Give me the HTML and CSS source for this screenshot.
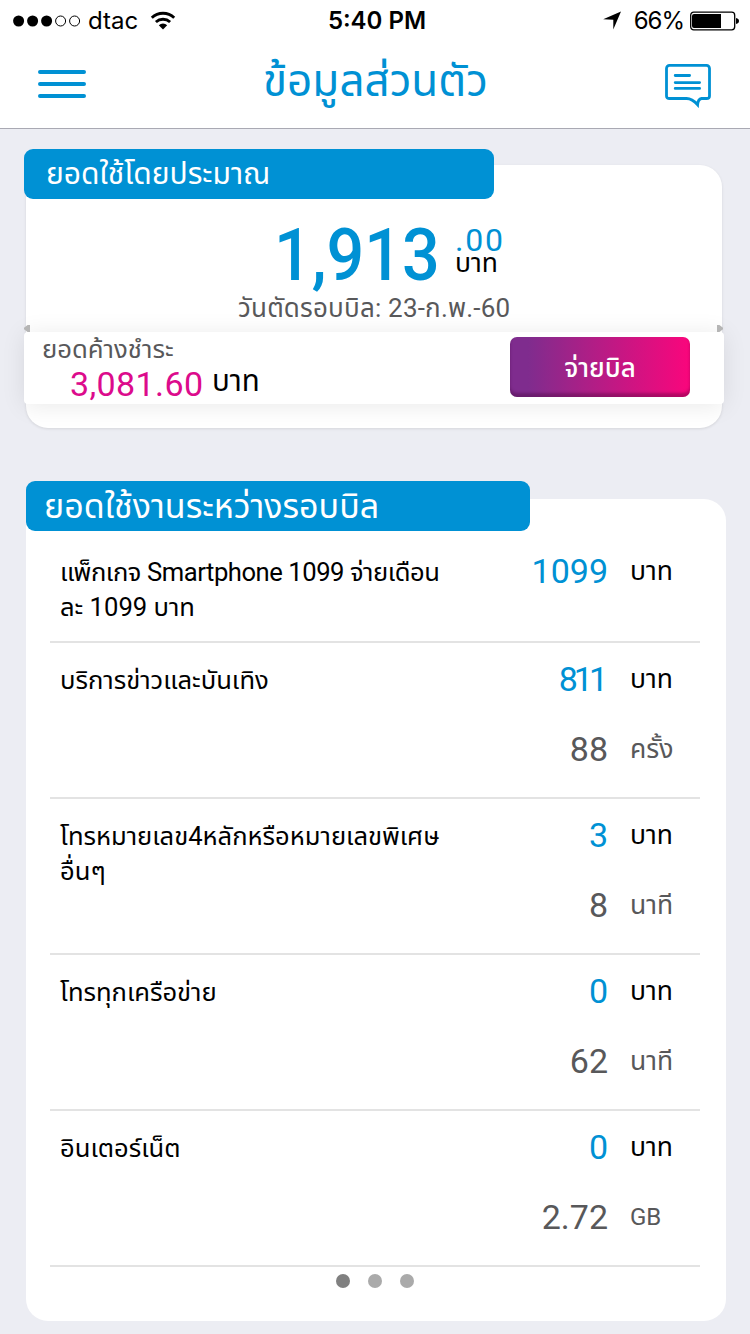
FILE: index.html
```html
<!DOCTYPE html>
<html lang="th">
<head>
    <meta charset="UTF-8">
    <meta name="viewport" content="width=device-width, initial-scale=1.0">
    <title>ข้อมูลส่วนตัว</title>
    <link rel="stylesheet" href="styles.css">
</head>
<body>
    <!-- Status bar -->
    <div class="status">
        <div class="status-left">
            <svg width="68" height="12" viewBox="0 0 68 12">
                <circle cx="5.6" cy="6" r="5.5"/>
                <circle cx="19.6" cy="6" r="5.5"/>
                <circle cx="33.6" cy="6" r="5.5"/>
                <circle cx="47.6" cy="6" r="5" fill="none" stroke="#000"/>
                <circle cx="61.6" cy="6" r="5" fill="none" stroke="#000"/>
            </svg>
            <span class="carrier">dtac</span>
            <svg class="wifi" width="26" height="20" viewBox="0 0 26 20">
                <path d="M1.8 6.7a16.5 16.5 0 0 1 22.4 0M5.9 11a10.6 10.6 0 0 1 14.2 0" fill="none" stroke="#000" stroke-width="2.9"/>
                <path d="M13 18.6l-4.2-4.4a6.3 6.3 0 0 1 8.4 0z"/>
            </svg>
        </div>
        <div class="clock">5:40 PM</div>
        <div class="status-right">
            <svg width="18" height="19" viewBox="0 0 18 19">
                <path d="M18 0.5L10.3 18.5V8.8L0.2 8.2z"/>
            </svg>
            <span class="percent">66%</span>
            <svg width="49" height="20" viewBox="0 0 49 20">
                <rect x="0.7" y="1.2" width="44" height="17.6" rx="3" fill="none" stroke="#000" stroke-width="1.3"/>
                <path d="M4 3h27v14H4a2 2 0 0 1-2-2V5a2 2 0 0 1 2-2zM46 7q3 .6 3 3t-3 3z"/>
            </svg>
        </div>
    </div>

    <!-- Header -->
    <div class="header">
        <svg width="48" height="30" viewBox="0 0 48 30">
            <path d="M2 3h44M2 15h44M2 27h44" stroke="#0091d4" stroke-width="4" stroke-linecap="round"/>
        </svg>
        <h1>ข้อมูลส่วนตัว</h1>
        <svg class="chat" width="46" height="44" viewBox="0 0 46 44" fill="none" stroke="#0091d4" stroke-width="2.8" stroke-linecap="round">
            <path d="M4.5 1.4h37a3 3 0 0 1 3 3v27.5q0 2.600-3 2.600h-5q-3.500.5-3.900 6.200q-5.500-6.200-11-6.200H4.500q-3 0-3-2.600V4.400a3 3 0 0 1 3-3z"/>
            <path d="M10.200 11.500h14.400M10.200 18.600h24.400M10.200 24.400h24.400"/>
        </svg>
    </div>

    <!-- Current balance -->
    <div class="tab tab-balance">ยอดใช้โดยประมาณ</div>
    <div class="card balance">
        <div class="total">
            <div class="baht"><span class="narrow">1,913</span></div>
            <div class="total-side">
                <span class="satang">.00</span>
                <span class="unit">บาท</span>
            </div>
        </div>
        <div class="cutoff">วันตัดรอบบิล: 23-ก.พ.-60</div>
        <div class="folds"><i></i><i></i></div>
        <div class="due">
            <div class="due-info">
                <div class="due-label">ยอดค้างชำระ</div>
                <div class="due-amount">
                    <span class="pink">3,081.60</span>
                    <span class="due-unit">บาท</span>
                </div>
            </div>
            <button class="btn-pay">จ่ายบิล</button>
        </div>
    </div>

    <!-- Usage in this billing cycle -->
    <div class="tab tab-usage">ยอดใช้งานระหว่างรอบบิล</div>
    <div class="card usage">
        <div class="row row-short">
            <div class="name"><span class="package">แพ็กเกจ Smartphone 1099 จ่ายเดือน</span><br>ละ 1099 บาท</div>
            <div class="num">1099</div><div class="unit">บาท</div>
        </div>
        <div class="row">
            <div class="name">บริการข่าวและบันเทิง</div>
            <div class="num tight">811</div><div class="unit">บาท</div>
            <div class="num used">88</div><div class="unit used">ครั้ง</div>
        </div>
        <div class="row">
            <div class="name">โทรหมายเลข4หลักหรือหมายเลขพิเศษ<br>อื่นๆ</div>
            <div class="num">3</div><div class="unit">บาท</div>
            <div class="num used">8</div><div class="unit used">นาที</div>
        </div>
        <div class="row">
            <div class="name">โทรทุกเครือข่าย</div>
            <div class="num">0</div><div class="unit">บาท</div>
            <div class="num used">62</div><div class="unit used">นาที</div>
        </div>
        <div class="row">
            <div class="name">อินเตอร์เน็ต</div>
            <div class="num">0</div><div class="unit">บาท</div>
            <div class="num used">2.72</div><div class="unit used gb">GB</div>
        </div>
        <div class="dots"><i class="active"></i><i></i><i></i></div>
    </div>
</body>
</html>
```
FILE: styles.css
```css
* {
    box-sizing: border-box;
}
body {
    margin: 0;
    height: 1334px;
    overflow: hidden;
    background: #ecedf3;
    color: #000;
    font-family: Roboto, "Noto Sans Thai", "Noto Sans", sans-serif;
    white-space: nowrap;
}
svg {
    display: block;
    flex: none;
}
.status {
    height: 40px;
    padding: 1px 11px 0 13px;
    display: grid;
    grid-template-columns: 1fr auto 1fr;
    align-items: center;
    background: #fff;
    font-family: Inter, sans-serif;
    font-size: 24px;
    line-height: 39px;
}
.status-left, .status-right {
    display: flex;
    align-items: center;
}
.carrier {
    margin-left: 7px;
}
.wifi {
    margin-left: 12px;
}
.clock {
    padding-left: 2px;
    font-weight: 600;
}
.status-right {
    justify-content: flex-end;
}
.percent {
    margin: 0 6px 0 13px;
    letter-spacing: -1px;
}
.header {
    height: 89px;
    padding: 0 39px 0 38px;
    display: flex;
    align-items: center;
    justify-content: space-between;
    background: #fff;
    border-bottom: 1px solid #a9a9b3;
}
.chat {
    margin-top: 4px;
}
h1 {
    margin: 0;
    color: #0091d4;
    font-size: 44px;
    font-weight: 400;
    line-height: 70px;
    padding-bottom: 6px;
}
.tab {
    position: relative;
    height: 50px;
    border-radius: 9px;
    background: #0091d4;
    color: #fff;
    line-height: 50px;
}
.tab-balance {
    width: 470px;
    margin: 20px 0 0 24px;
    padding-left: 22px;
    font-size: 30px;
}
.tab-usage {
    width: 504px;
    margin: 53px 0 0 26px;
    padding-left: 18px;
    font-size: 34px;
}
.card {
    background: #fff;
    border-radius: 22px;
}
.balance {
    width: 696px;
    height: 263px;
    margin: -34px 0 0 26px;
    padding-top: 49px;
    box-shadow: 0 1px 3px rgba(0, 0, 0, 0.1);
}
.total {
    display: flex;
    height: 78px;
    padding-left: 248px;
}
.baht {
    width: 181px;
    color: #0091d4;
    font-size: 73px;
    font-weight: 500;
    line-height: 82px;
}
.narrow {
    display: inline-block;
    transform: scaleX(0.91);
    transform-origin: left center;
}
.total-side {
    display: flex;
    flex-direction: column;
    padding-top: 10px;
}
.satang {
    height: 26px;
    color: #0091d4;
    font-size: 32px;
    line-height: 33px;
    letter-spacing: 1.8px;
}
.total-side .unit {
    font-size: 26.5px;
    line-height: 26px;
}
.cutoff {
    height: 32px;
    padding-left: 212px;
    color: #58585a;
    font-size: 26px;
    letter-spacing: 0.2px;
    line-height: 32px;
}
.folds {
    display: flex;
    justify-content: space-between;
    align-items: flex-end;
    margin: 0 -1px 0 -2px;
    height: 8px;
}
.folds i {
    width: 6px;
    height: 7px;
    background: #b5b5b5;
    clip-path: polygon(0 40%, 60% 0, 100% 0, 100% 100%, 60% 100%, 0 60%);
}
.folds i:last-child {
    transform: scaleX(-1);
}
.due {
    display: flex;
    justify-content: space-between;
    align-items: flex-start;
    width: 700px;
    height: 72px;
    margin-left: -2px;
    padding: 5px 34px 0 18px;
    border-radius: 4px;
    background: #fff;
    box-shadow: 0 2px 24px rgba(0, 0, 0, 0.09);
}
.due-label {
    height: 28px;
    color: #58585a;
    font-size: 25.7px;
    line-height: 25px;
}
.due-amount {
    display: flex;
    padding-left: 28px;
    line-height: 39px;
}
.pink {
    width: 142px;
    color: #dc0b8c;
    font-size: 34px;
    letter-spacing: 0.4px;
}
.due-unit {
    font-size: 29.5px;
    line-height: 32px;
}
.btn-pay {
    width: 180px;
    height: 60px;
    padding: 0;
    border: none;
    border-radius: 7px;
    background: linear-gradient(90deg, #7f2c8e 10%, #a92087 40%, #fa067c);
    box-shadow: inset 0 -4px 3px rgba(60, 0, 50, 0.35);
    color: #fff;
    font: 500 26px/62px Roboto, "Noto Sans Thai", "Noto Sans", sans-serif;
}
.usage {
    width: 700px;
    height: 822px;
    margin: -32px 0 0 26px;
    padding: 32px 26px 0 24px;
}
.row {
    display: grid;
    grid-template-columns: 1fr 130px 92px;
    grid-template-rows: 70px 70px;
    height: 156px;
    padding: 0 0 0 10px;
    border-bottom: 2px solid #e3e3e3;
}
.row-short {
    height: 112px;
    padding-top: 4px;
}
.name {
    grid-row: span 2;
    padding-top: 20px;
    font-size: 25.6px;
    line-height: 35px;
}
.package {
    letter-spacing: -0.45px;
}
.num {
    text-align: right;
    color: #0091d4;
    font-size: 34px;
    line-height: 72px;
}
.num.tight {
    letter-spacing: -4px;
    padding-right: 4px;
}
.row .unit {
    padding-left: 22px;
    font-size: 26.5px;
    line-height: 72px;
}
.row .used {
    color: #58585a;
}
.row .gb {
    font-size: 24px;
}
.dots {
    display: flex;
    justify-content: center;
    gap: 18px;
    padding-top: 7px;
}
.dots i {
    width: 14px;
    height: 14px;
    border-radius: 50%;
    background: #aaa;
}
.dots .active {
    background: #808080;
}
```
